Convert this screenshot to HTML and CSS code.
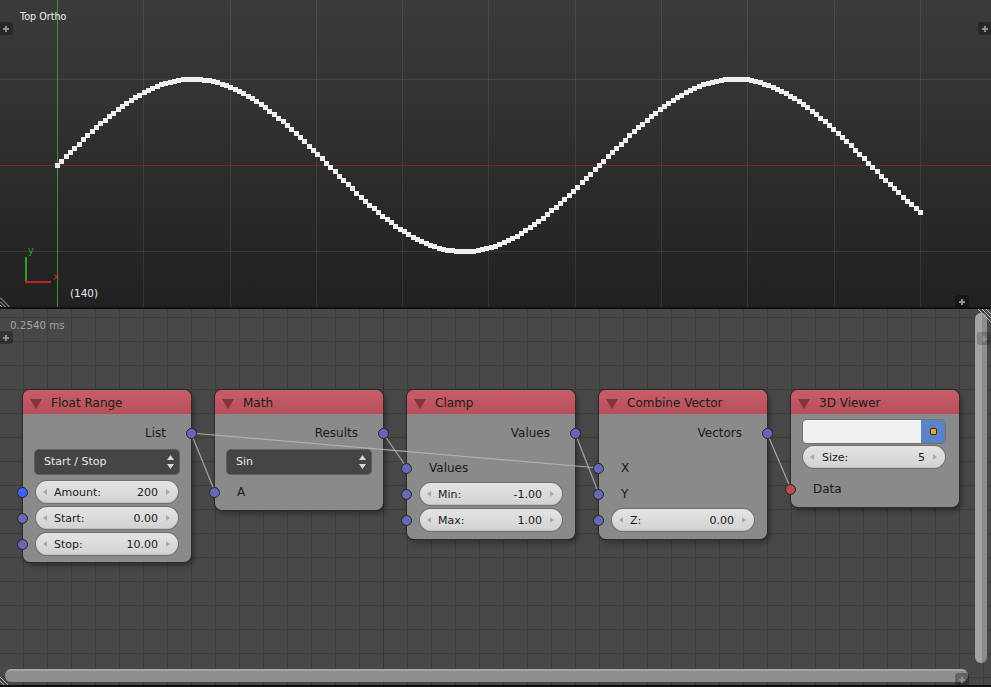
FILE: index.html
```html
<!DOCTYPE html>
<html>
<head>
<meta charset="utf-8">
<link rel="stylesheet" href="styles.css">
</head>
<body>
<section class="viewport">
  <svg class="vp-canvas" width="991" height="307" viewBox="0 0 991 307">
    <g class="vp-grid">
      <line x1="143.5" y1="0" x2="143.5" y2="307"/>
      <line x1="230.5" y1="0" x2="230.5" y2="307"/>
      <line x1="316.5" y1="0" x2="316.5" y2="307"/>
      <line x1="402.5" y1="0" x2="402.5" y2="307"/>
      <line x1="488.5" y1="0" x2="488.5" y2="307"/>
      <line x1="575.5" y1="0" x2="575.5" y2="307"/>
      <line x1="661.5" y1="0" x2="661.5" y2="307"/>
      <line x1="747.5" y1="0" x2="747.5" y2="307"/>
      <line x1="834.5" y1="0" x2="834.5" y2="307"/>
      <line x1="920.5" y1="0" x2="920.5" y2="307"/>
      <line x1="0" y1="79.5" x2="991" y2="79.5"/>
      <line x1="0" y1="251.5" x2="991" y2="251.5"/>
    </g>
    <line class="axis-x" x1="0" y1="165.5" x2="991" y2="165.5"/>
    <line class="axis-y" x1="57.5" y1="0" x2="57.5" y2="307"/>
    <g id="curve" class="curve"></g>
    <g class="gizmo">
      <rect x="25" y="257" width="2" height="26" fill="#2f9a2f"/>
      <rect x="25" y="281" width="26" height="2" fill="#c42222"/>
      <text x="28" y="254" class="giz-y">y</text>
      <text x="53" y="280" class="giz-x">x</text>
    </g>
  </svg>
  <div class="vp-label">Top Ortho</div>
  <div class="vp-frame">(140)</div>
  <span class="plus vp-tl"></span>
  <span class="plus vp-tr"></span>
  <span class="plus vp-br"></span>
  <svg class="hatch vp-hatch" width="11" height="11" viewBox="0 0 11 11">
    <path d="M0 1.5L9.5 11M0 5.5L5.5 11M0 9L2 11" stroke="#b8b8b8" stroke-width="1" fill="none"/>
  </svg>
</section>
<div class="divider"></div>
<section class="editor">
  <div class="timing">0.2540 ms</div>

  <div class="node-row">
    <div class="node">
      <div class="node-head"><span class="collapse"></span><span class="node-title">Float Range</span></div>
      <div class="node-body">
        <div class="out-row">List<span class="socket s-float out"></span></div>
        <div class="menu">Start / Stop<svg class="updown" width="7" height="14" viewBox="0 0 7 14"><path d="M3.5 0L7 5H0z M0 9h7l-3.5 5z" fill="#d6d6d6"/></svg></div>
        <div class="inputs">
          <div class="in-row"><span class="socket s-int in"></span><div class="field"><span class="arr l"></span><span class="f-label">Amount:</span><span class="f-val">200</span><span class="arr r"></span></div></div>
          <div class="in-row"><span class="socket s-float in"></span><div class="field"><span class="arr l"></span><span class="f-label">Start:</span><span class="f-val">0.00</span><span class="arr r"></span></div></div>
          <div class="in-row"><span class="socket s-float in"></span><div class="field"><span class="arr l"></span><span class="f-label">Stop:</span><span class="f-val">10.00</span><span class="arr r"></span></div></div>
        </div>
      </div>
    </div>

    <div class="node">
      <div class="node-head"><span class="collapse"></span><span class="node-title">Math</span></div>
      <div class="node-body">
        <div class="out-row">Results<span class="socket s-float out"></span></div>
        <div class="menu">Sin<svg class="updown" width="7" height="14" viewBox="0 0 7 14"><path d="M3.5 0L7 5H0z M0 9h7l-3.5 5z" fill="#d6d6d6"/></svg></div>
        <div class="inputs">
          <div class="in-row label"><span class="socket s-float in"></span>A</div>
        </div>
      </div>
    </div>

    <div class="node">
      <div class="node-head"><span class="collapse"></span><span class="node-title">Clamp</span></div>
      <div class="node-body tall">
        <div class="out-row">Values<span class="socket s-float out"></span></div>
        <div class="inputs after-out">
          <div class="in-row label"><span class="socket s-float in"></span>Values</div>
          <div class="in-row"><span class="socket s-float in"></span><div class="field"><span class="arr l"></span><span class="f-label">Min:</span><span class="f-val">-1.00</span><span class="arr r"></span></div></div>
          <div class="in-row"><span class="socket s-float in"></span><div class="field"><span class="arr l"></span><span class="f-label">Max:</span><span class="f-val">1.00</span><span class="arr r"></span></div></div>
        </div>
      </div>
    </div>

    <div class="node">
      <div class="node-head"><span class="collapse"></span><span class="node-title">Combine Vector</span></div>
      <div class="node-body tall">
        <div class="out-row">Vectors<span class="socket s-float out"></span></div>
        <div class="inputs after-out">
          <div class="in-row label"><span class="socket s-float in"></span>X</div>
          <div class="in-row label"><span class="socket s-float in"></span>Y</div>
          <div class="in-row"><span class="socket s-float in"></span><div class="field"><span class="arr l"></span><span class="f-label">Z:</span><span class="f-val">0.00</span><span class="arr r"></span></div></div>
        </div>
      </div>
    </div>

    <div class="node">
      <div class="node-head"><span class="collapse"></span><span class="node-title">3D Viewer</span></div>
      <div class="node-body">
        <div class="color-field"><span class="cf-white"></span><span class="cf-btn"><span class="cf-dot"></span></span></div>
        <div class="field vpill"><span class="arr l"></span><span class="f-label">Size:</span><span class="f-val">5</span><span class="arr r"></span></div>
        <div class="in-row label data-row"><span class="socket s-data in"></span>Data</div>
      </div>
    </div>
  </div>

  <svg class="links" width="991" height="376" viewBox="0 0 991 376">
    <line x1="191" y1="124" x2="215" y2="183"/>
    <line x1="191" y1="124" x2="599" y2="159"/>
    <line x1="383" y1="124" x2="407" y2="159"/>
    <line x1="575" y1="124" x2="599" y2="185"/>
    <line x1="767" y1="124" x2="791" y2="180"/>
  </svg>

  <div class="vscroll"></div>
  <div class="hscroll"></div>
  <span class="plus ed-tl"></span>
  <span class="plus ed-tr"></span>
  <span class="plus ed-br"></span>
  <svg class="hatch ed-hatch-tr" width="13" height="13" viewBox="0 0 13 13">
    <path d="M0 0L13 13M4 0L13 9M8 0L13 5" stroke="#c0c0c0" stroke-width="1" fill="none"/>
  </svg>
  <svg class="hatch ed-hatch-bl" width="10" height="10" viewBox="0 0 10 10">
    <path d="M0 1L9 10M0 5L5 10" stroke="#b8b8b8" stroke-width="1" fill="none"/>
  </svg>
</section>
<div class="bottom-line"></div>
<script src="script.js"></script>
</body>
</html>
```

FILE: styles.css
```css
* { box-sizing: border-box; }
html, body { margin: 0; padding: 0; }
body {
  width: 991px;
  height: 687px;
  overflow: hidden;
  background: #101010;
  font-family: "DejaVu Sans", "Liberation Sans", sans-serif;
}

/* ---------- 3D viewport ---------- */
.viewport {
  position: relative;
  height: 307px;
  overflow: hidden;
  background: linear-gradient(#3b3b3b, #212121);
}
.vp-canvas { position: absolute; left: 0; top: 0; display: block; }
.vp-grid line { stroke: rgba(255, 255, 255, 0.085); stroke-width: 1; }
.axis-x { stroke: #802626; stroke-width: 1; }
.axis-y { stroke: #2e9a2e; stroke-width: 1; }
.curve rect { fill: #efefef; shape-rendering: crispEdges; }
.giz-y { fill: #2f9a2f; font-size: 10px; font-family: "DejaVu Sans", sans-serif; }
.giz-x { fill: #c42222; font-size: 10px; font-family: "DejaVu Sans", sans-serif; }
.vp-label {
  position: absolute; left: 20px; top: 11px;
  font-size: 9.6px; line-height: 12px; color: #f2f2f2;
}
.vp-frame {
  position: absolute; left: 70px; top: 287px;
  font-size: 10.4px; line-height: 13px; color: #eaeaea;
}
.vp-hatch { position: absolute; left: 0; top: 296px; }

.divider { height: 2px; background: #101010; }
.bottom-line { height: 2px; background: #101010; }

/* ---------- node editor ---------- */
.editor {
  position: relative;
  height: 376px;
  overflow: hidden;
  background-color: #484848;
  background-image:
    linear-gradient(90deg, transparent 383px, #343434 383px, #343434 384px, transparent 384px),
    linear-gradient(90deg, #3c3c3c 1px, transparent 1px),
    linear-gradient(#3c3c3c 1px, transparent 1px);
  background-size: 100% 100%, 24px 24px, 24px 24px;
  background-position: 0 0, 23px 0, 0 8px;
  background-repeat: no-repeat, repeat, repeat;
}
.timing {
  position: absolute; left: 10px; top: 10px;
  font-size: 10.3px; line-height: 13px; color: #a2a2a2;
}

.node-row {
  display: flex;
  align-items: flex-start;
  gap: 24px;
  padding: 81px 0 0 23px;
}
.node {
  position: relative;
  width: 168px;
  border-radius: 7px;
  background: #8a8a8a;
  box-shadow: 0 0 0 1px #2c2c2c, 2px 3px 6px rgba(0, 0, 0, 0.45);
}
.node-head {
  height: 24px;
  display: flex;
  align-items: center;
  padding: 2px 0 0 7px;
  border-radius: 7px 7px 0 0;
  background: linear-gradient(#c75d67, #b6505a);
  color: #1b1b1b;
  font-size: 12px;
}
.collapse {
  width: 0; height: 0;
  border-left: 6px solid transparent;
  border-right: 6px solid transparent;
  border-top: 10px solid #86323b;
  margin-top: 1px;
}
.node-title { margin-left: 9px; }

.node-body { padding: 6px 0 5px; }
.node-body.tall { padding-bottom: 6px; }

.out-row {
  position: relative;
  height: 26px;
  line-height: 26px;
  text-align: right;
  padding-right: 25px;
  font-size: 12px;
  color: #1a1a1a;
}
.socket {
  position: absolute;
  top: 7.5px;
  width: 11px;
  height: 11px;
  border-radius: 50%;
  border: 1px solid #262626;
  z-index: 5;
}
.socket.out { right: -6px; }
.socket.in { left: -6px; }
.s-float { background: #6767b8; }
.s-int { background: #3e62ff; }
.s-data { background: #bd4a4d; }

.menu {
  position: relative;
  margin: 4px 12px 0;
  height: 24px;
  line-height: 24px;
  padding-left: 9px;
  border-radius: 4px;
  background: #454545;
  box-shadow: 0 0 0 1px rgba(50, 50, 50, 0.5);
  color: #e8e8e8;
  font-size: 11px;
}
.updown { position: absolute; right: 5px; top: 5px; }

.inputs { margin-top: 5px; }
.inputs.after-out { margin-top: 9px; }
.in-row {
  position: relative;
  height: 26px;
  display: flex;
  align-items: center;
  padding: 0 13px;
}
.in-row.label {
  padding-left: 22px;
  font-size: 12px;
  color: #1a1a1a;
}
.data-row { margin-top: 8px; }

.field {
  flex: 1;
  height: 22px;
  display: flex;
  align-items: center;
  padding: 0 8px 0 7px;
  border-radius: 11px;
  background: linear-gradient(#e4e4e4, #d2d2d2);
  box-shadow: 0 0 0 1px rgba(60, 60, 60, 0.35), inset 0 -1px 0 rgba(0, 0, 0, 0.07);
  color: #1a1a1a;
  font-size: 11px;
}
.f-label { flex: 1; margin-left: 7px; }
.f-val { margin-right: 8px; }
.arr { width: 0; height: 0; border-top: 3.5px solid transparent; border-bottom: 3.5px solid transparent; }
.arr.l { border-right: 4px solid #a9a9a9; }
.arr.r { border-left: 4px solid #a9a9a9; }

.color-field {
  display: flex;
  height: 23px;
  margin: 0 14px 0 12px;
  border-radius: 4px;
  overflow: hidden;
  box-shadow: 0 0 0 1px rgba(60, 60, 60, 0.35);
}
.cf-white { flex: 1; background: #f1f1f1; }
.cf-btn {
  width: 24px;
  display: flex;
  align-items: center;
  justify-content: center;
  background: #5b84c6;
}
.cf-dot {
  width: 5px; height: 5px;
  border-radius: 1px;
  background: #f0a833;
  box-shadow: 0 0 0 1px #3a2c14;
}
.vpill { flex: none; margin: 3px 14px 0 12px; padding-right: 8px; }
.vpill .f-label { margin-left: 8px; }

.links {
  position: absolute; left: 0; top: 0;
  z-index: 2;
  pointer-events: none;
}
.links line { stroke: #b6b6b6; stroke-width: 1.2; opacity: 0.85; }

.vscroll {
  position: absolute; left: 975px; top: 4px;
  width: 12px; height: 350px;
  border-radius: 6px;
  background: linear-gradient(90deg, #a3a3a3 55%, #8d8d8d 55%);
  z-index: 3;
}
.hscroll {
  position: absolute; left: 5px; top: 360px;
  width: 963px; height: 13px;
  border-radius: 6px;
  background: linear-gradient(#a6a6a6 0, #a6a6a6 2px, #8e8e8e 2px);
  z-index: 3;
}

.plus {
  position: absolute;
  width: 14px; height: 13px;
  border-radius: 3px;
  background: rgba(0, 0, 0, 0.3);
  z-index: 6;
}
.plus::before, .plus::after {
  content: "";
  position: absolute;
  background: #8e8e8e;
}
.plus::before { left: 4px; top: 5.5px; width: 6px; height: 2px; }
.plus::after { left: 6px; top: 3.5px; width: 2px; height: 6px; }
.vp-tl { left: -1px; top: 22px; }
.vp-tr { left: 978px; top: 22px; }
.vp-br { left: 955px; top: 295px; }
.ed-tl { left: -1px; top: 22px; }
.ed-tr { left: 977px; top: 23px; background: rgba(0, 0, 0, 0.18); }
.ed-br { left: 955px; top: 364px; }

.hatch { position: absolute; z-index: 7; }
.ed-hatch-tr { left: 978px; top: 0; }
.ed-hatch-bl { left: 0; top: 367px; }
```

FILE: script.js
```js
(function () {
  var g = document.getElementById('curve');
  var ns = 'http://www.w3.org/2000/svg';
  var n = 200;
  for (var i = 0; i < n; i++) {
    var t = 10 * i / (n - 1);
    var x = Math.round(57 + 86.3 * t);
    var y = Math.round(165 - 86.3 * Math.sin(t));
    var r = document.createElementNS(ns, 'rect');
    r.setAttribute('x', x - 2);
    r.setAttribute('y', y - 2);
    r.setAttribute('width', 5);
    r.setAttribute('height', 5);
    g.appendChild(r);
  }
})();
```
